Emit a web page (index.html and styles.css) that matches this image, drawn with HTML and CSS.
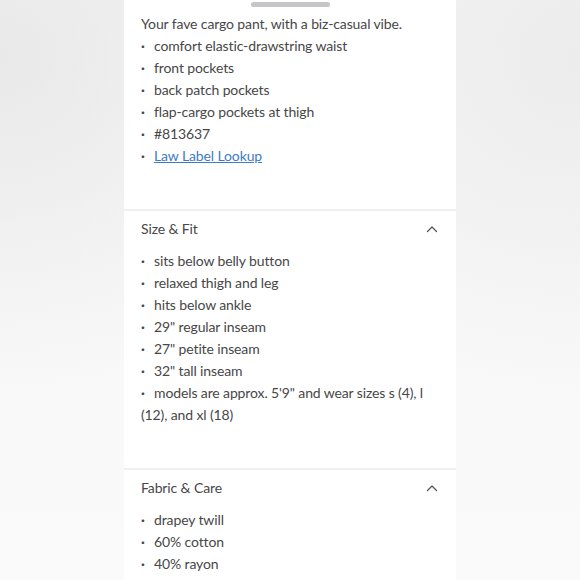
FILE: index.html
```html
<!DOCTYPE html>
<html lang="en">
<head>
<meta charset="utf-8">
<title>Product details</title>
<link rel="stylesheet" href="styles.css">
</head>
<body>
<div class="panel">
  <div class="handle"></div>
  <section class="section first">
    <p class="intro">Your fave cargo pant, with a biz-casual vibe.</p>
    <ul class="list">
      <li>comfort elastic-drawstring waist</li>
      <li>front pockets</li>
      <li>back patch pockets</li>
      <li>flap-cargo pockets at thigh</li>
      <li>#813637</li>
      <li><a href="#" class="link">Law Label Lookup</a></li>
    </ul>
  </section>
  <section class="section">
    <div class="head">
      <span class="title">Size &amp; Fit</span>
      <svg class="chev" width="12" height="8" viewBox="0 0 12 8"><path d="M1.5 6.5 L6 2 L10.5 6.5" fill="none" stroke="#555" stroke-width="1.3" stroke-linecap="round" stroke-linejoin="round"/></svg>
    </div>
    <ul class="list">
      <li>sits below belly button</li>
      <li>relaxed thigh and leg</li>
      <li>hits below ankle</li>
      <li>29" regular inseam</li>
      <li>27" petite inseam</li>
      <li>32" tall inseam</li>
      <li class="wrap">models are approx. 5'9" and wear sizes s (4), l (12), and xl (18)</li>
    </ul>
  </section>
  <section class="section">
    <div class="head">
      <span class="title">Fabric &amp; Care</span>
      <svg class="chev" width="12" height="8" viewBox="0 0 12 8"><path d="M1.5 6.5 L6 2 L10.5 6.5" fill="none" stroke="#555" stroke-width="1.3" stroke-linecap="round" stroke-linejoin="round"/></svg>
    </div>
    <ul class="list">
      <li>drapey twill</li>
      <li>60% cotton</li>
      <li>40% rayon</li>
    </ul>
  </section>
</div>
</body>
</html>
```
FILE: styles.css
```css
html, body {
  margin: 0;
  padding: 0;
  height: 100%;
  overflow: hidden;
}
body {
  background:
    radial-gradient(ellipse at 0% 10%, #e9e9e9 0%, rgba(240,240,240,0) 45%),
    radial-gradient(ellipse at 100% 10%, #ececec 0%, rgba(240,240,240,0) 45%),
    linear-gradient(#f6f6f6, #fafafa);
  display: flex;
  justify-content: center;
  font-family: Lato, "Noto Sans", sans-serif;
  color: #474747;
  font-size: 14px;
  line-height: 22px;
  letter-spacing: -0.12px;
}
.panel {
  width: 332px;
  background: #fff;
  min-height: 100%;
}
.handle {
  width: 79px;
  height: 5px;
  border-radius: 3px;
  background: #c6c6c8;
  margin: 2px auto 0;
}
.section {
  padding: 7px 17px 42px;
  border-top: 2px solid #efefef;
}
.section.first {
  border-top: none;
  padding-top: 6px;
  padding-bottom: 42px;
}
.intro {
  margin: 0;
}
.list {
  list-style: none;
  margin: 0;
  padding: 0;
}
.list li {
  padding-left: 13px;
  position: relative;
}
.list li::before {
  content: "\00B7";
  position: absolute;
  left: 0;
  top: 0;
  font-weight: 700;
}
.list li.wrap {
  padding-left: 0;
  text-indent: 13px;
}
.list li.wrap::before {
  text-indent: 0;
}
.link {
  color: #3d7cc0;
  text-decoration: underline;
}
.head {
  display: flex;
  justify-content: space-between;
  align-items: center;
  height: 22px;
  margin-bottom: 10px;
}
.title {
  font-size: 14px;
}
.chev {
  margin-right: 1px;
}
```
